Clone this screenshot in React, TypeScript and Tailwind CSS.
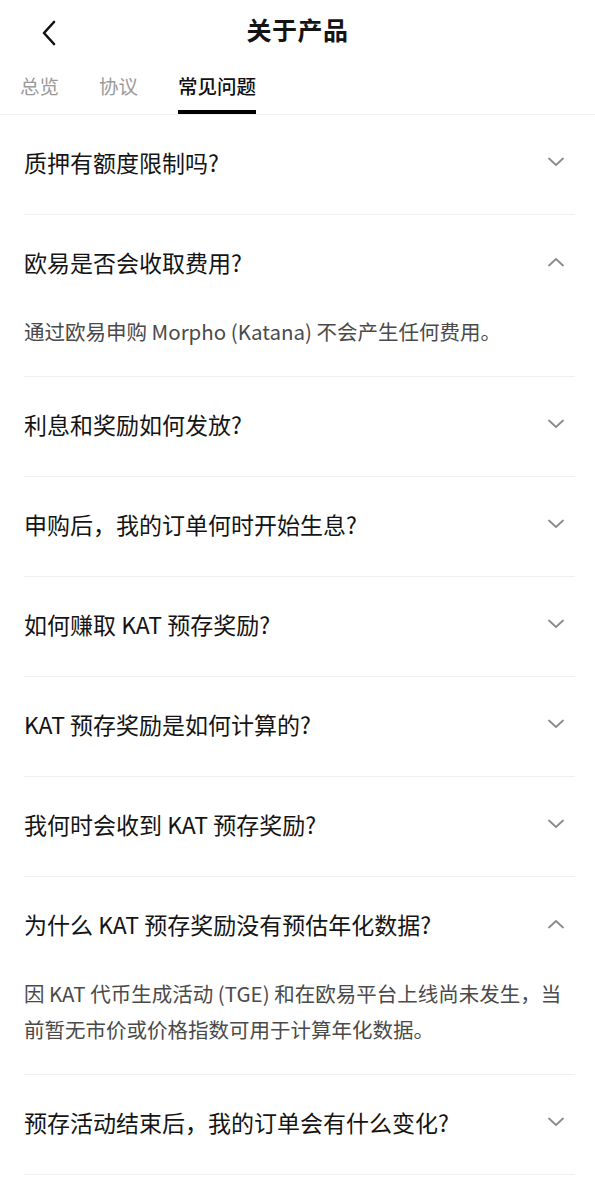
import React, { useState } from 'react';

const FAQS = [
  { q: '质押有额度限制吗?', a: '' },
  { q: '欧易是否会收取费用?', a: '通过欧易申购 Morpho (Katana) 不会产生任何费用。' },
  { q: '利息和奖励如何发放?', a: '' },
  { q: '申购后，我的订单何时开始生息?', a: '' },
  { q: '如何赚取 KAT 预存奖励?', a: '' },
  { q: 'KAT 预存奖励是如何计算的?', a: '' },
  { q: '我何时会收到 KAT 预存奖励?', a: '' },
  {
    q: '为什么 KAT 预存奖励没有预估年化数据?',
    a: '因 KAT 代币生成活动 (TGE) 和在欧易平台上线尚未发生，当前暂无市价或价格指数可用于计算年化数据。',
  },
  { q: '预存活动结束后，我的订单会有什么变化?', a: '' },
];

const TABS = ['总览', '协议', '常见问题'];

const Chevron = ({ up }: { up: boolean }) => (
  <svg width="18" height="10" viewBox="0 0 18 10" fill="none" className="mr-[10px] shrink-0">
    <polyline
      points={up ? '2,8.5 9,2 16,8.5' : '2,1.5 9,8 16,1.5'}
      stroke="#8a8a8a"
      strokeWidth="1.8"
      strokeLinecap="round"
      strokeLinejoin="round"
    />
  </svg>
);

export default function App() {
  const [open, setOpen] = useState<number[]>([1, 7]);
  const [tab, setTab] = useState(2);

  const toggle = (i: number) =>
    setOpen(prev => (prev.includes(i) ? prev.filter(x => x !== i) : [...prev, i]));

  return (
    <div
      className="w-[595px] min-h-[1199px] bg-white text-[#141414]"
      style={{ fontFamily: '"Noto Sans CJK SC", "Noto Sans", sans-serif' }}
    >
      {/* header */}
      <div className="relative flex h-[62px] items-center justify-center pb-1">
        <button type="button" className="absolute left-[36px] top-[16px] p-1" aria-label="back">
          <svg width="18" height="26" viewBox="0 0 18 26" fill="none">
            <polyline points="14,2 4,13 14,24" stroke="#111" strokeWidth="2.6" strokeLinecap="round" strokeLinejoin="round" />
          </svg>
        </button>
        <h1 className="text-[25px] font-bold leading-none tracking-[0.5px]">关于产品</h1>
      </div>

      {/* tabs */}
      <div className="flex gap-10 border-b border-[#f0f0f0] pl-5">
        {TABS.map((t, i) => (
          <button
            key={t}
            type="button"
            onClick={() => setTab(i)}
            className="flex flex-col items-center pt-[11px]"
          >
            <span
              className={`text-[19.5px] leading-[26px] ${
                tab === i ? 'font-medium text-[#111]' : 'text-[#9a9a9a]'
              }`}
            >
              {t}
            </span>
            <span className={`mt-[11px] h-[4px] w-full ${tab === i ? 'bg-black' : 'bg-transparent'}`} />
          </button>
        ))}
      </div>

      {/* faq list */}
      <div className="pl-6 pr-5">
        {FAQS.map((item, i) => {
          const isOpen = open.includes(i);
          const expanded = isOpen && !!item.a;
          return (
            <div key={item.q} className="border-b border-[#efefef]">
              <button
                type="button"
                onClick={() => toggle(i)}
                className={`flex w-full items-center justify-between text-left ${
                  expanded ? 'h-[98px] pb-[5px]' : 'h-[99px] pb-[6px]'
                }`}
              >
                <span className="text-[23px] leading-[30px] text-[#141414]">{item.q}</span>
                <Chevron up={isOpen} />
              </button>
              {expanded && (
                <p className="pb-[27px] pr-1 text-[20.5px] leading-[36px] text-[#4a4a4a]">{item.a}</p>
              )}
            </div>
          );
        })}
      </div>
    </div>
  );
}
